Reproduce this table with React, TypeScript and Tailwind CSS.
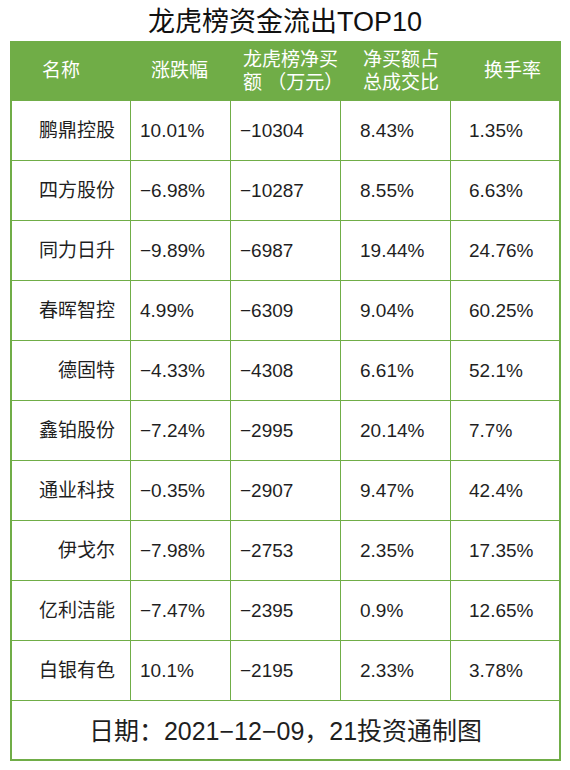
import React from "react";

const rows: [string, string, string, string, string][] = [
  ["鹏鼎控股", "10.01%", "−10304", "8.43%", "1.35%"],
  ["四方股份", "−6.98%", "−10287", "8.55%", "6.63%"],
  ["同力日升", "−9.89%", "−6987", "19.44%", "24.76%"],
  ["春晖智控", "4.99%", "−6309", "9.04%", "60.25%"],
  ["德固特", "−4.33%", "−4308", "6.61%", "52.1%"],
  ["鑫铂股份", "−7.24%", "−2995", "20.14%", "7.7%"],
  ["通业科技", "−0.35%", "−2907", "9.47%", "42.4%"],
  ["伊戈尔", "−7.98%", "−2753", "2.35%", "17.35%"],
  ["亿利洁能", "−7.47%", "−2395", "0.9%", "12.65%"],
  ["白银有色", "10.1%", "−2195", "2.33%", "3.78%"],
];

const font = { fontFamily: '"Liberation Sans", "Noto Sans CJK SC", sans-serif' };

export default function App() {
  return (
    <div className="w-[570px] h-[770px] bg-white text-[#1f1f1f]" style={font}>
      <div className="h-[41px] flex items-center justify-center pt-[3px] text-[27px] leading-none text-[#111]">
        龙虎榜资金流出TOP10
      </div>
      <div className="ml-[10px] w-[551px] border-2 border-[#70ad47]">
        <div className="grid grid-cols-[119px_100px_110px_110px_108px] h-[57px] bg-[#70ad47] text-white text-[19px] leading-[23px]">
          <div className="flex items-center pl-[30px] pb-[2px]">名称</div>
          <div className="flex items-center pl-[20px] pb-[2px]">涨跌幅</div>
          <div className="flex flex-col justify-center pl-[12px] pb-[2px]">
            <span>龙虎榜净买</span>
            <span>额 （万元）</span>
          </div>
          <div className="flex flex-col justify-center pl-[22px] pb-[2px]">
            <span>净买额占</span>
            <span>总成交比</span>
          </div>
          <div className="flex items-center pl-[33px] pb-[2px]">换手率</div>
        </div>
        {rows.map((r, i) => (
          <div
            key={i}
            className="grid grid-cols-[119px_100px_110px_110px_108px] h-[60px] border-t border-[#70ad47] text-[19px] leading-none"
          >
            <div className="flex items-center justify-end pr-[15px] border-r border-[#70ad47]">{r[0]}</div>
            <div className="flex items-center pl-[9px] border-r border-[#70ad47]">{r[1]}</div>
            <div className="flex items-center pl-[9px] border-r border-[#70ad47]">{r[2]}</div>
            <div className="flex items-center pl-[19px] border-r border-[#70ad47]">{r[3]}</div>
            <div className="flex items-center pl-[18px]">{r[4]}</div>
          </div>
        ))}
        <div className="h-[59px] border-t border-[#70ad47] flex items-center justify-center text-[25px] leading-none pt-[2px]">
          日期：2021−12−09，21投资通制图
        </div>
      </div>
    </div>
  );
}
